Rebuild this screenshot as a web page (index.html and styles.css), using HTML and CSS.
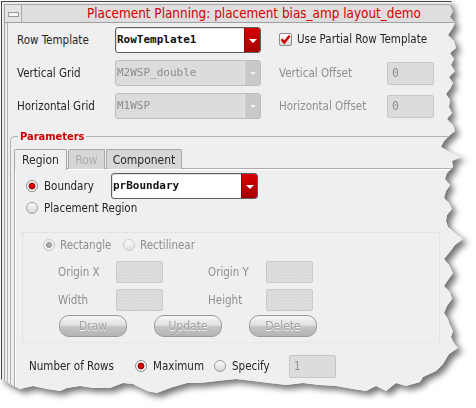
FILE: index.html
```html
<!DOCTYPE html>
<html>
<head>
<meta charset="utf-8">
<link rel="stylesheet" href="styles.css">
</head>
<body>
<div class="stage">
  <div class="torn">
    <div class="window">
      <div class="frame">
        <div class="titlebar">
          <div class="sysbox"><span class="minus"></span></div>
          <div class="title">Placement Planning: placement bias_amp layout_demo</div>
        </div>
        <div class="body">
          <div class="form-top">
            <div class="row">
              <span class="lbl w98">Row Template</span>
              <div class="combo"><span class="val">RowTemplate1</span><span class="arrow"><i class="tri"></i></span></div>
              <span class="check">
                <svg width="13" height="13" viewBox="0 0 13 13">
                  <defs><linearGradient id="cbg" x1="0" y1="0" x2="0" y2="1"><stop offset="0" stop-color="#ffffff"/><stop offset="1" stop-color="#d6d6d6"/></linearGradient></defs>
                  <rect x="0.5" y="0.5" width="12" height="12" rx="1.5" fill="url(#cbg)" stroke="#8c8c8c"/>
                  <path d="M2.6 6.2 L5.3 9.6 L10.6 2.8" fill="none" stroke="#d00000" stroke-width="2.4" stroke-linejoin="miter"/>
                </svg>
                <span class="lbl">Use Partial Row Template</span>
              </span>
            </div>
            <div class="row">
              <span class="lbl w98">Vertical Grid</span>
              <div class="combo off"><span class="val">M2WSP_double</span><span class="arrow"><i class="tri"></i></span></div>
              <span class="lbl dis w108 ml18">Vertical Offset</span>
              <span class="input mono"><span>0</span></span>
            </div>
            <div class="row">
              <span class="lbl w98">Horizontal Grid</span>
              <div class="combo off"><span class="val">M1WSP</span><span class="arrow"><i class="tri"></i></span></div>
              <span class="lbl dis w108 ml18">Horizontal Offset</span>
              <span class="input mono"><span>0</span></span>
            </div>
          </div>

          <fieldset class="group">
            <legend class="legend">Parameters</legend>
            <div class="tabs">
              <span class="tab active">Region</span>
              <span class="tab disabled">Row</span>
              <span class="tab">Component</span>
            </div>
            <div class="panel">
              <div class="prow boundary">
                <span class="radio on"></span>
                <span class="lbl w67">Boundary</span>
                <div class="combo wide"><span class="val">prBoundary</span><span class="arrow"><i class="tri"></i></span></div>
              </div>
              <div class="prow preg">
                <span class="radio"></span>
                <span class="lbl">Placement Region</span>
              </div>
              <div class="inner">
                <div class="prow shape">
                  <span class="ritem w80"><span class="radio dison"></span><span class="lbl dis">Rectangle</span></span>
                  <span class="ritem"><span class="radio disoff"></span><span class="lbl dis">Rectilinear</span></span>
                </div>
                <div class="grid">
                  <span class="lbl dis">Origin X</span><span class="input blank"></span>
                  <span class="lbl dis">Origin Y</span><span class="input blank"></span>
                  <span class="lbl dis">Width</span><span class="input blank"></span>
                  <span class="lbl dis">Height</span><span class="input blank"></span>
                </div>
                <div class="buttons">
                  <span class="btn">Draw</span>
                  <span class="btn">Update</span>
                  <span class="btn">Delete</span>
                </div>
              </div>
              <div class="prow rows">
                <span class="lbl w106">Number of Rows</span>
                <span class="ritem w79"><span class="radio on"></span><span class="lbl">Maximum</span></span>
                <span class="ritem w75"><span class="radio"></span><span class="lbl">Specify</span></span>
                <span class="input"><span>1</span></span>
              </div>
            </div>
          </fieldset>
        </div>
      </div>
    </div>
  </div>
</div>
</body>
</html>
```
FILE: styles.css
```css
html, body {
  margin: 0;
  padding: 0;
  background: #ffffff;
}
body {
  width: 476px;
  height: 408px;
  overflow: hidden;
  font-family: "DejaVu Sans Condensed", "DejaVu Sans", sans-serif;
  font-size: 11.5px;
  color: #252525;
}
.stage {
  width: 476px;
  height: 408px;
  filter: drop-shadow(4px 4px 3px rgba(0, 0, 0, 0.55));
}
.torn {
  width: 476px;
  height: 408px;
  clip-path: polygon(0 0, 452px 0, 449px 4px, 453px 10px, 450px 16px, 455px 22px, 452px 28px, 448px 34px, 454px 40px, 456px 47px, 450px 52px, 454px 58px, 451px 64px, 455px 70px, 449px 76px, 453px 82px, 450px 88px, 446px 93px, 450px 99px, 449px 106px, 452px 112px, 447px 118px, 453px 124px, 455px 130px, 450px 134px, 444px 140px, 441px 146px, 448px 150px, 461px 156px, 452px 160px, 453px 166px, 447px 172px, 445px 178px, 450px 184px, 446px 190px, 444px 197px, 449px 202px, 452px 208px, 447px 214px, 446px 220px, 448px 226px, 455px 232px, 463px 238px, 455px 244px, 449px 252px, 444px 258px, 449px 264px, 453px 272px, 448px 279px, 444px 285px, 450px 291px, 452px 298px, 447px 305px, 444px 312px, 448px 318px, 449px 322px, 453px 330px, 451px 336px, 454px 342px, 458px 347px, 449px 353px, 443px 363px, 436px 370px, 423px 376px, 420px 381px, 406px 385px, 396px 382px, 386px 390px, 376px 385px, 366px 390px, 353px 388px, 336px 385px, 319px 384px, 303px 382px, 286px 384px, 269px 382px, 253px 380px, 236px 378px, 217px 380px, 200px 382px, 187px 382px, 170px 387px, 157px 392px, 147px 390px, 133px 383px, 123px 382px, 110px 387px, 93px 387px, 80px 385px, 67px 387px, 60px 390px, 47px 388px, 33px 385px, 20px 388px, 10px 383px, 5px 380px, 0 378px);
}
.window {
  margin: 1px 0 0 1px;
  width: 475px;
  height: 407px;
  box-sizing: border-box;
  border-left: 1px solid #4a4a4a;
  border-top: 1px solid #4a4a4a;
  background: #ececec;
  padding: 2px 0 0 2px;
  overflow: hidden;
}
.frame {
  height: 100%;
  box-sizing: border-box;
  border-left: 1px solid #a4a4a4;
  border-top: 1px solid #a4a4a4;
}
.titlebar {
  display: flex;
  height: 17px;
  border-bottom: 1px solid #a0a0a0;
  background: #dedede;
}
.sysbox {
  width: 16px;
  border-right: 1px solid #a8a8a8;
  background: #e4e4e4;
}
.minus {
  display: block;
  width: 9px;
  height: 3px;
  margin: 7px 0 0 3px;
  border: 1px solid #9a9a9a;
  background: #f6f6f6;
}
.title {
  padding-left: 65px;
  font-size: 13.4px;
  line-height: 17px;
  color: #d40000;
  white-space: nowrap;
}
.body {
  margin-left: 2px;
  border-left: 1px solid #b4b4b4;
  background: #efefef;
  height: 380px;
}
.form-top {
  padding: 4px 0 0 9px;
  display: flex;
  flex-direction: column;
  gap: 7px;
}
.row {
  display: flex;
  align-items: center;
  height: 26px;
}
.lbl {
  white-space: nowrap;
  line-height: 14px;
}
.dis { color: #8e8e8e; }
.w98 { width: 98px; flex: none; }
.w108 { width: 108px; flex: none; }
.w67 { width: 67px; flex: none; }
.w106 { width: 106px; flex: none; }
.ml18 { margin-left: 18px; }
.mono, .val {
  font-family: "DejaVu Sans Mono", monospace;
}
.combo {
  display: flex;
  width: 146px;
  height: 26px;
  box-sizing: border-box;
  border: 1px solid #5e5e5e;
  border-radius: 3px;
  background: #ffffff;
  box-shadow: inset 1px 1px 0 #e2e2e2;
  flex: none;
}
.combo .val {
  flex: 1;
  padding-left: 1px;
  line-height: 24px;
  font-weight: bold;
  font-size: 11px;
  color: #111;
}
.combo .arrow {
  width: 15px;
  display: flex;
  align-items: center;
  justify-content: center;
  background: linear-gradient(#d80000, #a60000);
  border-left: 1px solid #8c0000;
  border-radius: 0 2px 2px 0;
}
.tri {
  display: block;
  width: 0;
  height: 0;
  border-left: 4px solid transparent;
  border-right: 4px solid transparent;
  border-top: 4px solid #ffffff;
  margin-top: 1px;
}
.combo.off {
  border-color: #bdbdbd;
  background: #dcdcdc;
  box-shadow: none;
}
.combo.off .val {
  font-weight: normal;
  color: #8c8c8c;
}
.combo.off .arrow {
  background: #c9c9c9;
  border-left: 1px solid #e6e6e6;
}
.combo.off .tri {
  border-top-color: #f2f2f2;
  border-left-width: 3px;
  border-right-width: 3px;
  border-top-width: 3px;
}
.combo.wide { width: 147px; }
.check {
  display: flex;
  align-items: center;
  gap: 5px;
  margin-left: 18px;
  margin-top: -2px;
}
.check svg { display: block; }
.input {
  display: flex;
  align-items: center;
  width: 47px;
  height: 23px;
  box-sizing: border-box;
  border: 1px solid #c6c6c6;
  border-radius: 2px;
  background: #dcdcdc;
  color: #8e8e8e;
  padding-left: 4px;
  flex: none;
}
.input.blank {
  height: 22px;
  background-color: #dcdcdc;
  background-image: radial-gradient(#d2d2d2 0.6px, transparent 0.8px);
  background-size: 3px 3px;
  border-color: #cacaca;
}

/* group */
.group {
  margin: 11px 0 0 2px;
  padding: 6px 0 0 3px;
  border: 1px solid #b2b2b2;
  border-right: none;
  border-bottom: none;
  border-radius: 5px 0 0 0;
  min-width: 0;
}
.legend {
  margin-left: 4px;
  padding: 0 2px;
  font-weight: bold;
  font-size: 11px;
  color: #cc0000;
  line-height: 13px;
}
.tabs {
  display: flex;
  gap: 1px;
  height: 20px;
  margin-bottom: -1px;
  position: relative;
  z-index: 1;
}
.tab {
  display: flex;
  align-items: center;
  justify-content: center;
  box-sizing: border-box;
  height: 20px;
  border: 1px solid #a8a8a8;
  border-bottom: none;
  border-radius: 2px 2px 0 0;
  background: #d6d6d6;
  color: #2c2c2c;
  font-size: 12px;
}
.tab:nth-child(1) { width: 53px; }
.tab:nth-child(2) { width: 37px; }
.tab:nth-child(3) { width: 76px; }
.tab.active {
  background: #efefef;
  height: 21px;
}
.tab.disabled { color: #ababab; }
.panel {
  border-top: 1px solid #acacac;
  border-left: 1px solid #acacac;
  box-shadow: inset 1px 1px 0 #ffffff;
  padding: 4px 0 0 11px;
  height: 260px;
}
.prow {
  display: flex;
  align-items: center;
}
.prow.boundary { height: 26px; }
.prow.preg { height: 18px; }
.radio {
  display: block;
  width: 12px;
  height: 12px;
  box-sizing: border-box;
  border-radius: 50%;
  border: 1px solid #9c9c9c;
  background: linear-gradient(#ffffff, #d4d4d4);
  margin-right: 6px;
  flex: none;
}
.radio.on {
  background: radial-gradient(circle at 50% 50%, #f00000 0, #c40000 2.4px, #7a0000 3.2px, #ffffff 3.7px, #e4e4e4 6px);
  border-color: #8c8c8c;
}
.radio.dison {
  background: radial-gradient(circle at 50% 50%, #b0b0b0 0, #9a9a9a 2.6px, #f4f4f4 3.4px, #e6e6e6 6px);
  border-color: #c4c4c4;
  margin-right: 5px;
}
.radio.disoff {
  background: linear-gradient(#fafafa, #e2e2e2);
  border-color: #cacaca;
  margin-right: 5px;
}
.ritem {
  display: flex;
  align-items: center;
  flex: none;
}
.w80 { width: 80px; }
.w79 { width: 79px; }
.w75 { width: 75px; }
.inner {
  margin: 15px 0 0 -4px;
  width: 396px;
  border: 1px dotted #d6d6d6;
  border-bottom-color: #e0e0e0;
  padding: 2px 0 5px 20px;
}
.prow.shape { height: 20px; }
.grid {
  display: grid;
  grid-template-columns: 58px 47px 45px 58px 47px;
  grid-template-rows: 22px 22px;
  row-gap: 6px;
  align-items: center;
  margin: 6px 0 0 15px;
}
.grid .lbl:nth-child(3), .grid .lbl:nth-child(7) { grid-column: 4; }
.buttons {
  display: flex;
  gap: 27px;
  margin: 4px 0 0 16px;
}
.btn {
  display: flex;
  align-items: center;
  justify-content: center;
  width: 68px;
  height: 22px;
  box-sizing: border-box;
  border: 1px solid #9a9a9a;
  border-radius: 10px;
  background: linear-gradient(#f6f6f6 0%, #e2e2e2 45%, #c4c4c4 55%, #b4b4b4 100%);
  color: #a0a0a0;
  text-shadow: 0 1px 0 #f4f4f4;
  font-size: 12px;
}
.prow.rows {
  margin: 12px 0 0 3px;
  height: 22px;
}
.prow.rows .radio { margin-right: 6px; }
```
